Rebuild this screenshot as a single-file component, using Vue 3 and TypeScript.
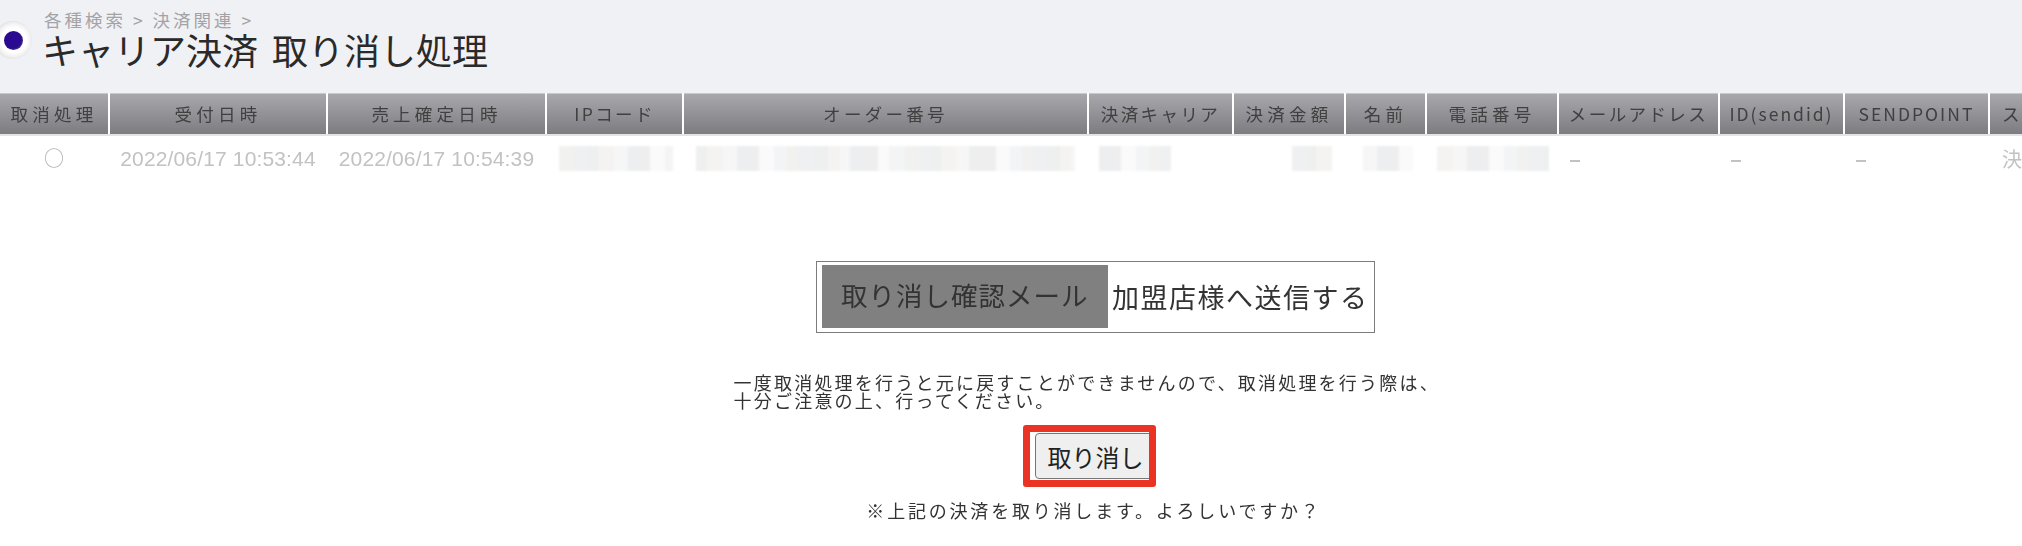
<script setup lang="ts">
interface Col { label: string; width: number; kind?: 'kana' | 'latin' | 'order' | 'cut' }
interface Piece { width: number; color: string }
interface MaskCell { pad: number; pieces: Piece[] }

const cols: Col[] = [
  { label: '取消処理', width: 108 },
  { label: '受付日時', width: 216 },
  { label: '売上確定日時', width: 217 },
  { label: 'IPコード', width: 135, kind: 'kana' },
  { label: 'オーダー番号', width: 403, kind: 'order' },
  { label: '決済キャリア', width: 143, kind: 'kana' },
  { label: '決済金額', width: 110 },
  { label: '名前', width: 79 },
  { label: '電話番号', width: 130 },
  { label: 'メールアドレス', width: 159, kind: 'kana' },
  { label: 'ID(sendid)', width: 123, kind: 'latin' },
  { label: 'SENDPOINT', width: 143, kind: 'latin' },
  { label: 'ス', width: 32, kind: 'cut' },
]
const gridTemplate = cols.map((c) => c.width + 'px').join(' ')

const shades = ['#eff0f2', '#f3f4f5', '#eeeeef', '#f6f6f7', '#eeefef', '#f1f1f0', '#fafafa', '#edeeef', '#f4f3f1']
function mosaic(total: number, seed: number, step = 13): Piece[] {
  const out: Piece[] = []
  let used = 0
  let i = seed
  while (used < total) {
    const width = Math.min(total - used, step + ((i * 5) % 7) - 3)
    out.push({ width, color: shades[(i * 4 + 1) % shades.length] })
    used += width
    i += 1
  }
  return out
}
const masks: Record<string, MaskCell> = {
  ip: { pad: 12, pieces: mosaic(114, 1) },
  order: { pad: 12, pieces: mosaic(379, 3) },
  carrier: { pad: 10, pieces: mosaic(72, 6) },
  amount: { pad: 58, pieces: mosaic(40, 2) },
  name: { pad: 17, pieces: mosaic(50, 5) },
  tel: { pad: 10, pieces: mosaic(112, 4) },
}
</script>

<template>
  <div class="page">
    <header class="top">
      <div class="ball"><div class="pupil"></div></div>
      <div class="heads">
        <div class="crumb">各種検索 &gt; 決済関連 &gt;</div>
        <h1 class="title">キャリア決済 取り消し処理</h1>
      </div>
    </header>

    <div class="grid head" :style="{ gridTemplateColumns: gridTemplate }">
      <div v-for="c in cols" :key="c.label" class="th" :class="c.kind">{{ c.label }}</div>
    </div>
    <div class="grid row" :style="{ gridTemplateColumns: gridTemplate }">
      <div class="td mark">○</div>
      <div class="td date">2022/06/17 10:53:44</div>
      <div class="td date">2022/06/17 10:54:39</div>
      <div v-for="(m, key) in masks" :key="key" class="td mask-cell" :style="{ paddingLeft: m.pad + 'px' }">
        <div class="mask">
          <span v-for="(p, i) in m.pieces" :key="i" :style="{ width: p.width + 'px', background: p.color }"></span>
        </div>
      </div>
      <div class="td left"><span class="dash"></span></div>
      <div class="td left"><span class="dash"></span></div>
      <div class="td left"><span class="dash"></span></div>
      <div class="td left status">決</div>
    </div>

    <main class="main">
      <div class="mail">
        <div class="mail-label">取り消し確認メール</div>
        <div class="mail-text">加盟店様へ送信する</div>
      </div>
      <p class="note">一度取消処理を行うと元に戻すことができませんので、取消処理を行う際は、<br />十分ご注意の上、行ってください。</p>
      <div class="btn-wrap">
        <button class="btn" type="button">取り消し</button>
        <div class="marker"></div>
      </div>
      <p class="ask">※上記の決済を取り消します。よろしいですか？</p>
    </main>
  </div>
</template>

<style>
html, body { margin: 0; background: #fff; overflow: hidden; }
</style>

<style scoped>
.page {
  width: 2022px;
  height: 546px;
  overflow: hidden;
  font-family: "Noto Sans CJK JP", "Liberation Sans", sans-serif;
  color: #333;
  filter: blur(0.5px);
}
.top {
  height: 93px;
  background: #f0f1f5;
  display: flex;
  align-items: flex-start;
  overflow: hidden;
}
.ball {
  flex: none;
  width: 38px;
  height: 38px;
  margin: 21px 12px 0 -6px;
  border-radius: 50%;
  background: radial-gradient(circle at 52% 50%, #fff 46%, #eeeef0 64%, #bdbdc0 86%, #8f8f92 100%);
  display: flex;
  align-items: center;
  justify-content: center;
}
.pupil {
  width: 19px;
  height: 19px;
  border-radius: 50%;
  background: radial-gradient(circle at 45% 45%, #2a0a90 58%, #54488f 80%, #d8d8e8 100%);
}
.heads { padding-top: 9px; }
.crumb {
  font-size: 17.5px;
  line-height: 22px;
  color: #a3a3a6;
  letter-spacing: 3px;
  white-space: nowrap;
}
.title {
  margin: -2px 0 0 -2px;
  font-size: 36px;
  line-height: 40px;
  font-weight: 400;
  color: #2a2a2a;
  letter-spacing: 0;
  word-spacing: 6px;
  white-space: nowrap;
}
.grid { display: grid; width: max-content; column-gap: 2px; }
.head { border-bottom: 2px solid #e4e4e6; }
.th {
  height: 40px;
  border-top: 1px solid #c8c8cc;
  background: linear-gradient(#a8a7ac, #7c7c81);
  color: #404040;
  font-size: 17.5px;
  line-height: 40px;
  letter-spacing: 4.2px;
  text-align: center;
  white-space: nowrap;
  overflow: hidden;
}
.th.kana { letter-spacing: 2.4px; }
.th.order { letter-spacing: 3.3px; }
.th.latin { font-size: 17.5px; letter-spacing: 2px; }
.th.cut { text-align: left; padding-left: 12px; letter-spacing: 0; }
.row { height: 45px; }
.td {
  color: #c2c2c2;
  font-size: 18px;
  line-height: 45px;
  text-align: center;
  white-space: nowrap;
  overflow: hidden;
}
.mark { font-size: 20px; line-height: 43px; font-weight: 500; color: #b4b4b4; }
.date {
  font-family: "Liberation Sans", sans-serif;
  font-size: 21px;
  letter-spacing: 0.15px;
}
.left { text-align: left; padding-left: 11px; }
.status { padding-left: 12px; font-size: 20px; line-height: 45px; }
.dash {
  display: inline-block;
  width: 10px;
  height: 2px;
  background: #c2c2c2;
  vertical-align: middle;
}
.mask-cell { display: flex; align-items: center; }
.mask {
  display: flex;
  height: 25px;
  filter: blur(1px);
}
.mask span { display: block; height: 100%; flex: none; }
.main {
  display: flex;
  flex-direction: column;
  align-items: center;
  padding-top: 80px;
}
.mail {
  width: 559px;
  height: 72px;
  box-sizing: border-box;
  border: 1px solid #7c7c7c;
  padding: 3px 5px 4px;
  display: flex;
  align-items: center;
  margin-left: 168px;
}
.mail-label {
  width: 288px;
  height: 100%;
  background: #808080;
  color: #333;
  font-size: 26.5px;
  line-height: 60px;
  letter-spacing: 1px;
  text-align: center;
  white-space: nowrap;
}
.mail-text {
  margin-left: 4px;
  font-size: 27px;
  letter-spacing: 1.5px;
  white-space: nowrap;
}
.note {
  margin: 40px 0 0 163px;
  width: 718px;
  font-size: 18px;
  line-height: 18px;
  letter-spacing: 2.22px;
  color: #333;
}
.btn-wrap {
  position: relative;
  margin: 16px 0 0 157px;
  width: 133px;
  height: 62px;
  box-sizing: border-box;
  padding: 8px 0 0 12px;
}
.btn {
  width: 120px;
  height: 46px;
  padding: 0 0 0 1px;
  font-family: inherit;
  font-size: 24px;
  color: #222;
  background: #efefef;
  border: 1px solid #767676;
  border-radius: 4px;
  box-sizing: border-box;
}
.marker {
  position: absolute;
  inset: 0;
  border: 7px solid #ea3323;
  border-radius: 3px;
}
.ask {
  margin: 12px 0 0 166px;
  font-size: 18px;
  line-height: 22px;
  letter-spacing: 2.8px;
  color: #333;
}
</style>
